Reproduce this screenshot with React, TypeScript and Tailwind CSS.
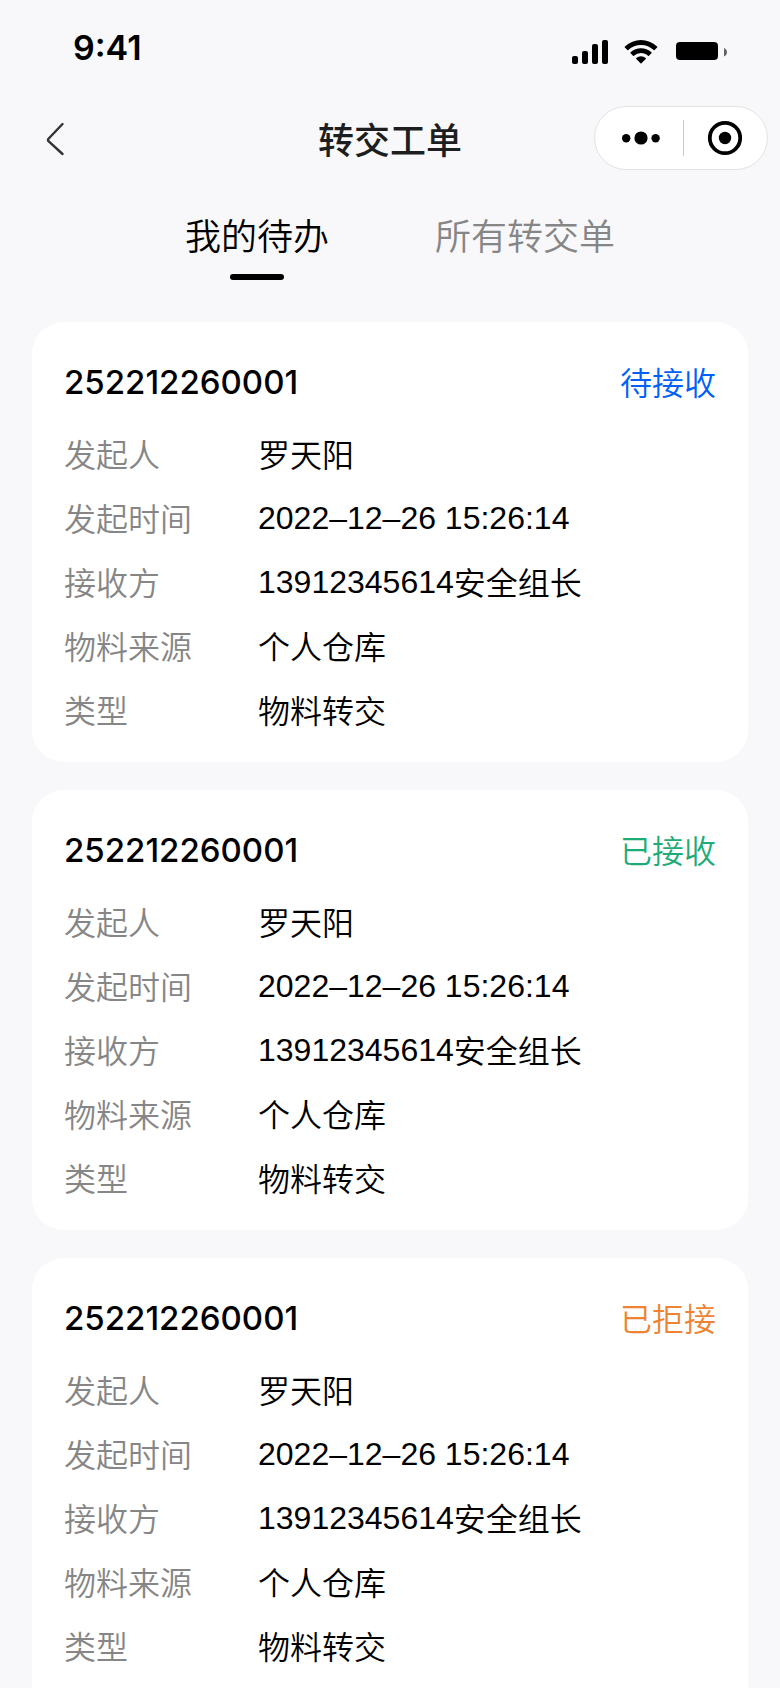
import React, { useState } from 'react';

type Status = 'pending' | 'accepted' | 'rejected';

interface TransferOrder {
  id: number;
  orderNo: string;
  status: Status;
  initiator: string;
  createdAt: string;
  receiverPhone: string;
  receiverName: string;
  source: string;
  type: string;
}

const statusMap: Record<Status, { text: string; color: string }> = {
  pending: { text: '待接收', color: 'text-[#0060fa]' },
  accepted: { text: '已接收', color: 'text-[#1fab78]' },
  rejected: { text: '已拒接', color: 'text-[#ee8333]' },
};

const baseOrder = {
  orderNo: '252212260001',
  initiator: '罗天阳',
  createdAt: '2022–12–26 15:26:14',
  receiverPhone: '13912345614',
  receiverName: '安全组长',
  source: '个人仓库',
  type: '物料转交',
};

const orders: TransferOrder[] = [
  { ...baseOrder, id: 1, status: 'pending' },
  { ...baseOrder, id: 2, status: 'accepted' },
  { ...baseOrder, id: 3, status: 'rejected' },
];

const tabs = ['我的待办', '所有转交单'];

const StatusBar: React.FC = () => (
  <div className="flex h-24 shrink-0 items-center justify-between pl-[73px] pr-[52px] text-black">
    <span className="font-['Inter',sans-serif] text-[34px] font-semibold leading-none">9:41</span>
    <div className="flex items-center gap-4 pt-2">
      <svg width="36" height="24" viewBox="0 0 36 24" fill="currentColor">
        <rect x="0" y="16" width="6" height="8" rx="2" />
        <rect x="10" y="11" width="6" height="13" rx="2" />
        <rect x="20" y="4" width="6" height="20" rx="2" />
        <rect x="30" y="0" width="6" height="24" rx="2" />
      </svg>
      <svg width="36" height="24" viewBox="0 0 18 12" fill="currentColor">
        <path d="M8.5 2.47c2.37 0 4.64.91 6.36 2.55.13.12.33.12.46 0l1.23-1.25a.35.35 0 0 0 0-.49c-4.5-4.37-11.6-4.37-16.1 0a.35.35 0 0 0 0 .49l1.23 1.25c.13.12.33.12.46 0A9.22 9.22 0 0 1 8.5 2.47Z" />
        <path d="M8.5 6.53c1.3 0 2.55.48 3.51 1.36.13.12.34.12.47-.01l1.23-1.25a.35.35 0 0 0 0-.49c-2.94-2.75-7.48-2.75-10.42 0a.35.35 0 0 0 0 .49l1.23 1.25c.13.13.33.13.46.01A5.24 5.24 0 0 1 8.5 6.53Z" />
        <path d="M10.97 9.27a.34.34 0 0 1-.1.24l-2.14 2.15a.33.33 0 0 1-.47 0L6.13 9.51a.34.34 0 0 1 .01-.49 3.65 3.65 0 0 1 4.72 0c.07.06.11.15.11.25Z" />
      </svg>
      <svg width="52" height="24" viewBox="0 0 52 24" fill="currentColor">
        <rect x="0" y="2" width="42" height="18" rx="4" />
        <path d="M48 8v8.5c1.8-.7 3-2.3 3-4.25S49.8 8.7 48 8Z" opacity="0.6" />
      </svg>
    </div>
  </div>
);

const NavBar: React.FC = () => (
  <header className="grid h-[84px] shrink-0 grid-cols-[1fr_auto_1fr] items-center px-3">
    <button type="button" aria-label="返回" className="ml-6 flex h-12 w-10 items-center justify-center">
      <svg width="20" height="36" viewBox="0 0 20 36" fill="none" stroke="#333333" strokeWidth="2.4">
        <path d="M16.5 4 2.5 18.8a1.8 1.8 0 0 0 0 2.4L16.5 34" strokeLinecap="round" strokeLinejoin="round" />
      </svg>
    </button>
    <h1 className="text-4xl font-medium leading-none text-[#1d1e20]">转交工单</h1>
    <div className="flex h-16 w-[174px] items-center justify-self-end rounded-full border border-[#e3e3e3] bg-white text-black">
      <button type="button" aria-label="更多" className="flex h-full flex-1 items-center justify-center pl-1">
        <svg width="38" height="14" viewBox="0 0 38 14" fill="currentColor">
          <circle cx="4.2" cy="7.3" r="4.2" />
          <circle cx="19" cy="7" r="6.6" />
          <circle cx="33.6" cy="7.3" r="4.2" />
        </svg>
      </button>
      <span className="h-9 w-px bg-[#c8c8c8]" />
      <button type="button" aria-label="关闭" className="flex h-full flex-1 items-center justify-center">
        <svg width="36" height="36" viewBox="0 0 36 36" fill="none">
          <circle cx="18" cy="18" r="15.2" stroke="currentColor" strokeWidth="3.8" />
          <circle cx="18" cy="18" r="6.2" fill="currentColor" />
        </svg>
      </button>
    </div>
  </header>
);

// Latin digits keep their own family so they stay on the row's optical centre
const Digits: React.FC<{ children: React.ReactNode }> = ({ children }) => (
  <span className="font-['Liberation_Sans',sans-serif] leading-[48px]">{children}</span>
);

const OrderCard: React.FC<{ order: TransferOrder }> = ({ order }) => {
  const status = statusMap[order.status];
  const rows = [
    { label: '发起人', value: order.initiator },
    { label: '发起时间', value: <Digits>{order.createdAt}</Digits> },
    { label: '接收方', value: <><Digits>{order.receiverPhone}</Digits><span>{order.receiverName}</span></> },
    { label: '物料来源', value: order.source },
    { label: '类型', value: order.type },
  ];

  return (
    <article className="shrink-0 rounded-[32px] bg-white px-8 pb-7 pt-9 last:pb-16">
      <div className="mb-6 flex h-12 items-start justify-between">
        <h2 className="font-['Inter',sans-serif] text-[33px] font-medium leading-[48px]">{order.orderNo}</h2>
        <span className={`text-[32px] leading-[46px] ${status.color}`}>{status.text}</span>
      </div>
      <dl className="flex flex-col gap-4 text-[32px] leading-[46px]">
        {rows.map((row) => (
          <div key={row.label} className="flex h-12 items-start">
            <dt className="w-[194px] shrink-0 text-[#868686]">{row.label}</dt>
            <dd className="flex min-w-0 flex-1">{row.value}</dd>
          </div>
        ))}
      </dl>
    </article>
  );
};

const App: React.FC = () => {
  const [activeTab, setActiveTab] = useState(0);

  return (
    <div className="flex h-screen flex-col bg-[#f8f8fa] font-['Noto_Sans_CJK_SC',sans-serif] font-[350] text-black">
      <StatusBar />
      <NavBar />

      {/* Tabs */}
      <nav className="flex shrink-0 justify-center gap-[106px] pb-[42px] pl-5 pt-7">
        {tabs.map((tab, idx) => (
          <button
            key={tab}
            type="button"
            onClick={() => setActiveTab(idx)}
            className={`flex flex-col items-center gap-[14px] text-4xl leading-[52px] ${activeTab === idx ? 'text-black' : 'text-[#868686]'}`}
          >
            {tab}
            <span className={`h-[6px] w-[54px] rounded-full ${activeTab === idx ? 'bg-black' : 'bg-transparent'}`} />
          </button>
        ))}
      </nav>

      {/* Order list */}
      <main className="flex min-h-0 flex-1 flex-col gap-7 overflow-y-auto px-8 [scrollbar-width:none]">
        {orders.map((order) => (
          <OrderCard key={order.id} order={order} />
        ))}
      </main>
    </div>
  );
};

export default App;
